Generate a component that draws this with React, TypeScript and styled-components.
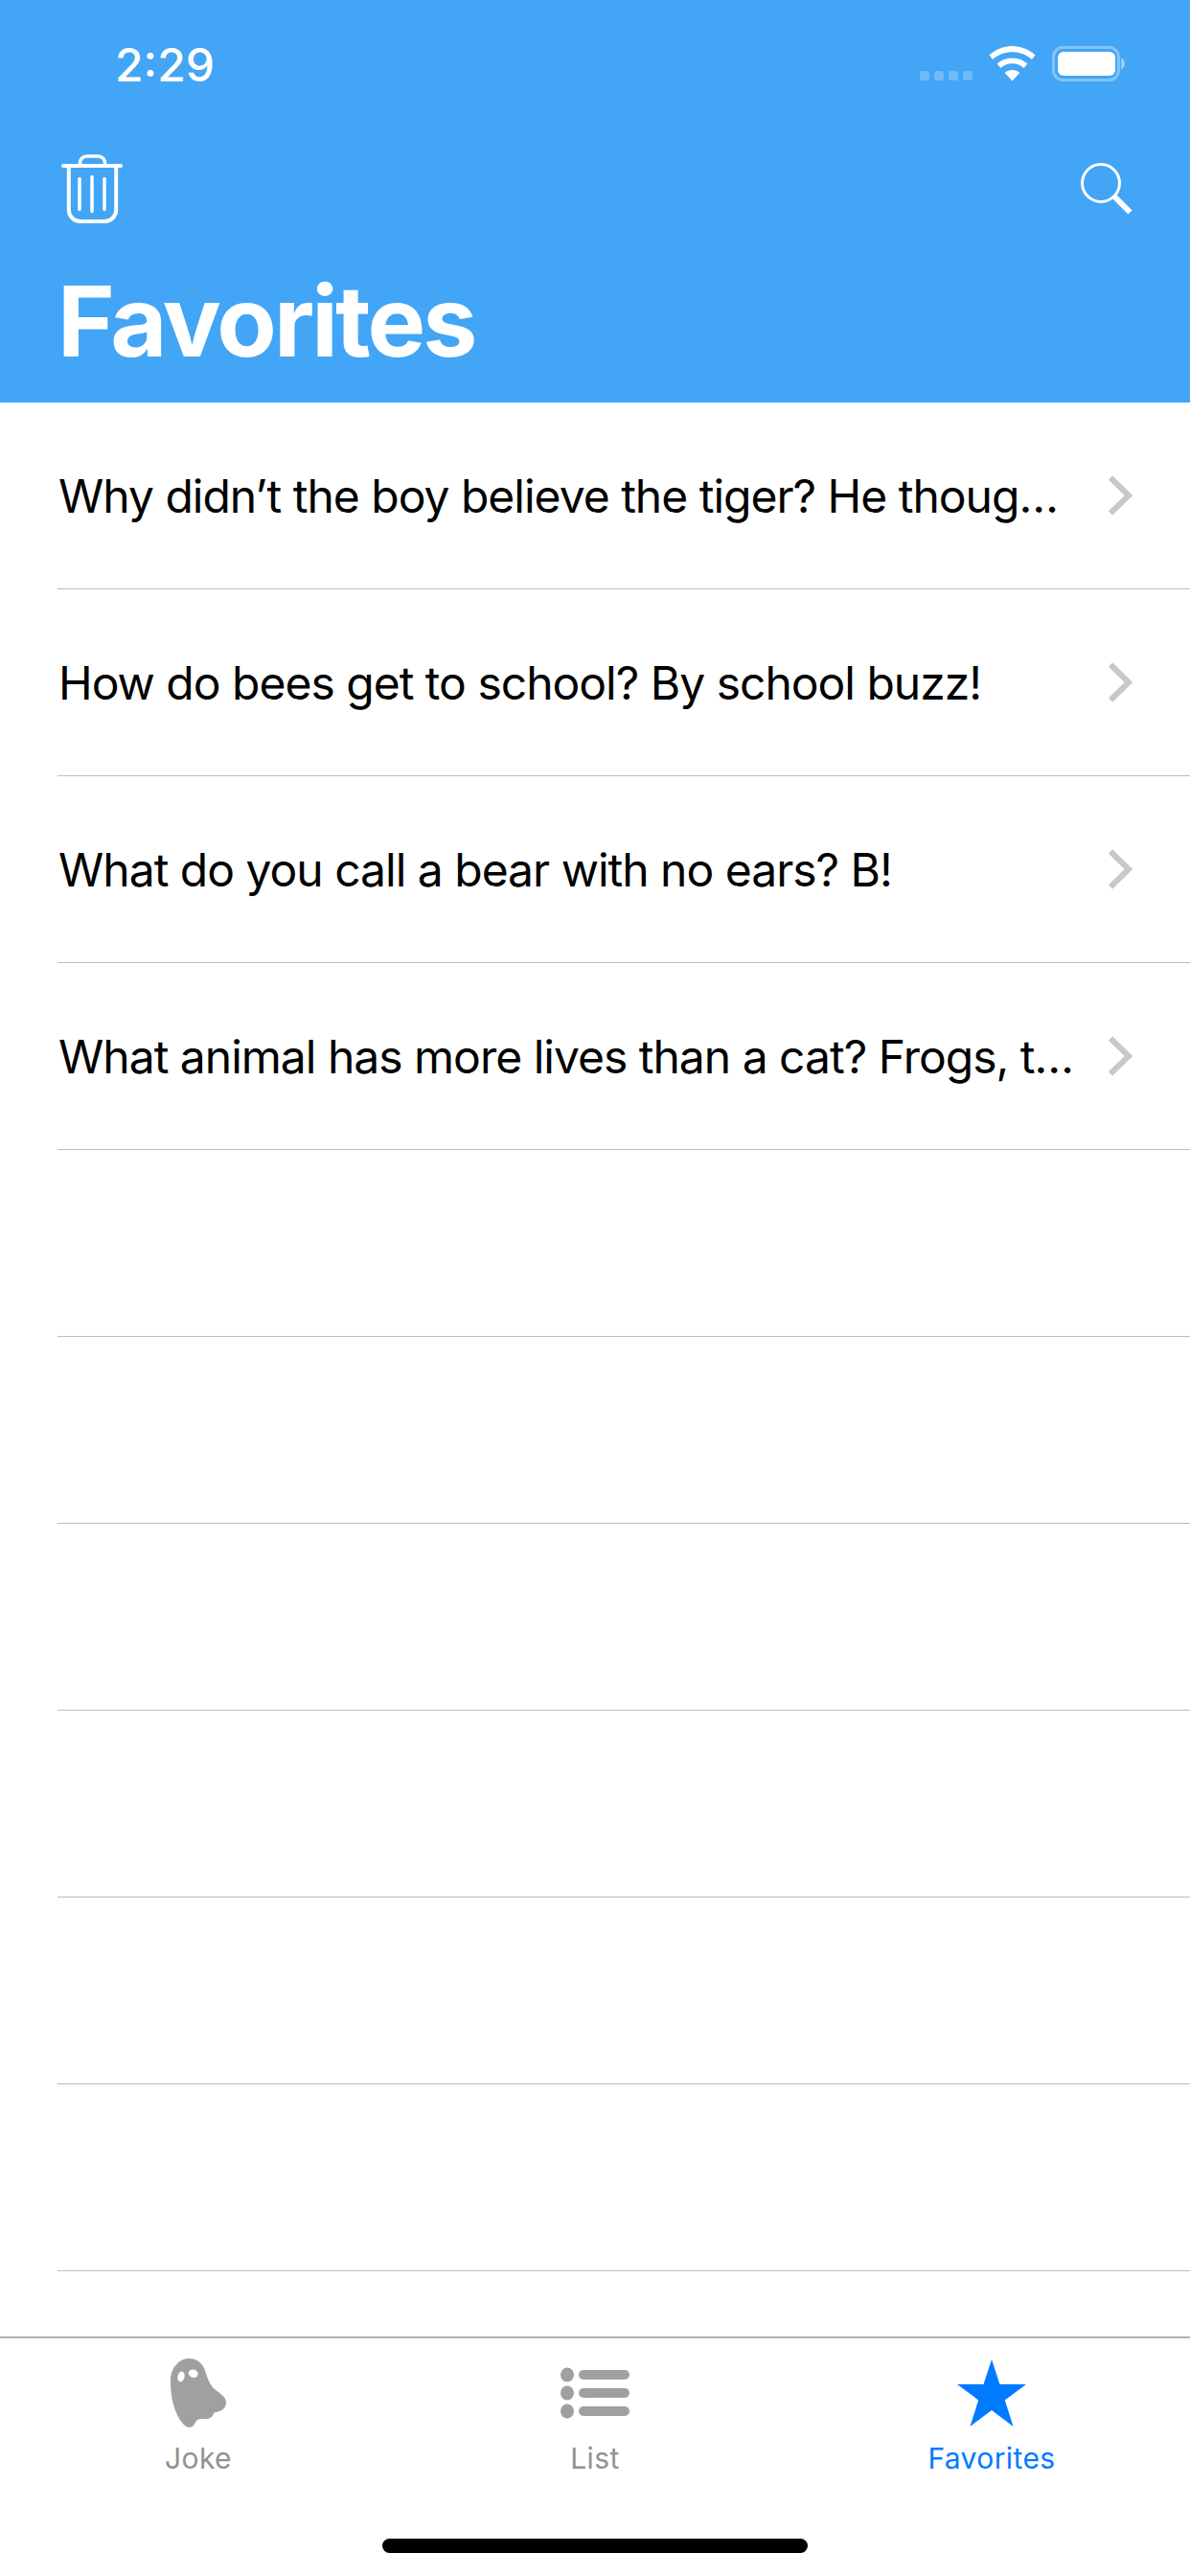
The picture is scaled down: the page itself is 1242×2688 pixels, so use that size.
import { createGlobalStyle } from "styled-components";
import styled from "styled-components";

const GlobalStyle = createGlobalStyle`
  html, body {
    margin: 0;
    padding: 0;
    background: #fff;
    font-family: "Inter", "Liberation Sans", sans-serif;
  }
`;

const Screen = styled.div`
  width: 1242px;
  height: 2688px;
  display: flex;
  flex-direction: column;
  overflow: hidden;
  background: #fff;
`;

const Header = styled.header`
  height: 420px;
  flex-shrink: 0;
  background: #42a5f5;
  color: #fff;
  display: flex;
  flex-direction: column;
`;

const StatusBar = styled.div`
  height: 134px;
  padding: 0 65px 0 120px;
  display: flex;
  align-items: center;
  justify-content: space-between;
`;

const Time = styled.span`
  font-size: 48px;
  font-weight: 500;
`;

const NavBar = styled.div`
  height: 112px;
  margin-top: 7px;
  padding: 0 60px 0 64px;
  display: flex;
  align-items: center;
  justify-content: space-between;
`;

const Title = styled.h1`
  margin: 20px 0 0;
  padding-left: 60px;
  font-size: 102px;
  font-weight: 700;
  line-height: 124px;
  letter-spacing: -2.9px;
`;

const JokeList = styled.div`
  flex: 1;
  overflow: hidden;
`;

const Row = styled.div`
  height: 195px;
  box-sizing: border-box;
  margin-left: 60px;
  padding-right: 60px;
  border-bottom: 1px solid #bcbcc0;
  display: flex;
  align-items: center;
  justify-content: space-between;
`;

const RowText = styled.span`
  margin-left: 1px;
  font-size: 48px;
  letter-spacing: -1px;
  color: #000;
  white-space: nowrap;
`;

const TabBar = styled.nav`
  height: 250px;
  flex-shrink: 0;
  box-sizing: border-box;
  border-top: 2px solid #b2b2b2;
  background: #fff;
  display: flex;
  flex-direction: column;
  align-items: center;
`;

const Tabs = styled.div`
  width: 100%;
  display: grid;
  grid-template-columns: repeat(3, 1fr);
`;

const Tab = styled.div<{ $active?: boolean }>`
  display: flex;
  flex-direction: column;
  align-items: center;
  color: ${(p) => (p.$active ? "#007aff" : "#929292")};
`;

const TabIcon = styled.div`
  height: 72px;
  margin-top: 21px;
  display: flex;
  align-items: center;
  justify-content: center;
`;

const TabLabel = styled.span`
  margin-top: 12px;
  font-size: 30px;
  line-height: 40px;
  letter-spacing: 0.4px;
`;

const HomeIndicator = styled.div`
  width: 444px;
  height: 15px;
  margin-top: 64px;
  border-radius: 8px;
  background: #000;
`;

const StatusIcons = () => (
  <svg width="217" height="38" viewBox="0 0 217 38">
    <g fill="#fff" fillOpacity="0.25">
      <rect x="0" y="26" width="10" height="10" rx="3" />
      <rect x="15" y="26" width="10" height="10" rx="3" />
      <rect x="30" y="26" width="10" height="10" rx="3" />
      <rect x="45" y="26" width="10" height="10" rx="3" />
    </g>
    <path
      fill="#fff"
      transform="translate(24.500 0)"
      d="M72 0c-9 0-17 3.500-24 9.500l3.500 4.500c5.700-5 12.600-7.800 20.500-7.800s14.800 2.800 20.500 7.800l3.500-4.500C89 3.500 81 0 72 0zM72 12.500c-6 0-11.600 2.200-15.800 6l3.700 4.500c3.300-3 7.500-4.700 12.100-4.700s8.800 1.700 12.100 4.700l3.700-4.500c-4.200-3.800-9.800-6-15.800-6zM72 25c-3 0-5.800 1.200-7.800 3L72 36.500 79.800 28c-2-1.800-4.800-3-7.800-3z"
    />
    <rect x="139.500" y="1.500" width="68" height="34" rx="10" fill="none" stroke="#fff" strokeOpacity="0.35" strokeWidth="3" />
    <rect x="144" y="6" width="60" height="25" rx="6" fill="#fff" />
    <path d="M210 12.500c2.500 1 4 3.300 4 6s-1.500 5-4 6z" fill="#fff" fillOpacity="0.45" />
  </svg>
);

const TrashIcon = () => (
  <svg width="64" height="72" viewBox="0 0 64 72" fill="none" stroke="#fff" strokeLinecap="round">
    <path d="M2 12h60" strokeWidth="4" />
    <path d="M19.500 11V9a7 7 0 0 1 7-7h12a7 7 0 0 1 7 7v2" strokeWidth="3.500" />
    <path d="M7.800 13v45a12 12 0 0 0 12 12h25.400a12 12 0 0 0 12-12V13" strokeWidth="4" />
    <path d="M19 25.500v32M32 23.500v36M45 25.500v32" strokeWidth="3.500" />
  </svg>
);

const SearchIcon = () => (
  <svg width="54" height="54" viewBox="0 0 54 54" fill="none" stroke="#fff">
    <circle cx="21" cy="21" r="19.500" strokeWidth="3" />
    <path d="M35 35l16.500 16.500" strokeWidth="6" />
  </svg>
);

const Chevron = () => (
  <svg width="26" height="42" viewBox="0 0 26 42" fill="none" stroke="#c7c7cc" strokeWidth="6">
    <path d="M3 2.500L22 21 3 39.500" />
  </svg>
);

const GhostIcon = () => (
  <svg width="58" height="72" viewBox="0 0 58 72">
    <path
      fill="#a0a0a0"
      d="M19 0C9 0 0 10 0 23c0 10 1 18 3 25 3 11 10 24 17 24 6 0 5-9 11-9 4 0 9 1 12-2 2-3 2-5 5-5 5-1 10-4 10-10 0-6-6-9-12-14-6-5-8-14-11-22C32 4 27 0 19 0z"
    />
    <ellipse cx="11" cy="19" rx="3.500" ry="5.500" fill="#fff" transform="rotate(15 11 19)" />
    <ellipse cx="23.700" cy="15.700" rx="5" ry="4.200" fill="#fff" transform="rotate(20 23.700 15.700)" />
  </svg>
);

const ListIcon = () => (
  <svg width="72" height="54" viewBox="0 0 72 54" fill="#a0a0a0">
    <ellipse cx="7" cy="8" rx="7" ry="7.500" />
    <ellipse cx="7" cy="27" rx="7" ry="7.500" />
    <ellipse cx="7" cy="46" rx="7" ry="7.500" />
    <rect x="19" y="3" width="53" height="10" rx="5" />
    <rect x="19" y="22" width="53" height="10" rx="5" />
    <rect x="19" y="41" width="53" height="10" rx="5" />
  </svg>
);

const StarIcon = () => (
  <svg width="72" height="70" viewBox="0 0 72 70" fill="#007aff">
    <path d="M36 0l8.500 26H72L49.800 42.500 58.500 70 36 53 13.500 70l8.700-27.500L0 26h27.500z" />
  </svg>
);

const jokes = [
  "Why didn’t the boy believe the tiger? He thoug…",
  "How do bees get to school? By school buzz!",
  "What do you call a bear with no ears? B!",
  "What animal has more lives than a cat? Frogs, t…",
  "",
  "",
  "",
  "",
  "",
  "",
];

const App = () => {
  return (
    <Screen>
      <GlobalStyle />
      <Header>
        <StatusBar>
          <Time>2:29</Time>
          <StatusIcons />
        </StatusBar>
        <NavBar>
          <TrashIcon />
          <SearchIcon />
        </NavBar>
        <Title>Favorites</Title>
      </Header>
      <JokeList>
        {jokes.map((joke, i) => (
          <Row key={i}>
            {joke && <RowText>{joke}</RowText>}
            {joke && <Chevron />}
          </Row>
        ))}
      </JokeList>
      <TabBar>
        <Tabs>
          <Tab>
            <TabIcon>
              <GhostIcon />
            </TabIcon>
            <TabLabel>Joke</TabLabel>
          </Tab>
          <Tab>
            <TabIcon>
              <ListIcon />
            </TabIcon>
            <TabLabel>List</TabLabel>
          </Tab>
          <Tab $active>
            <TabIcon>
              <StarIcon />
            </TabIcon>
            <TabLabel>Favorites</TabLabel>
          </Tab>
        </Tabs>
        <HomeIndicator />
      </TabBar>
    </Screen>
  );
};

export default App;
